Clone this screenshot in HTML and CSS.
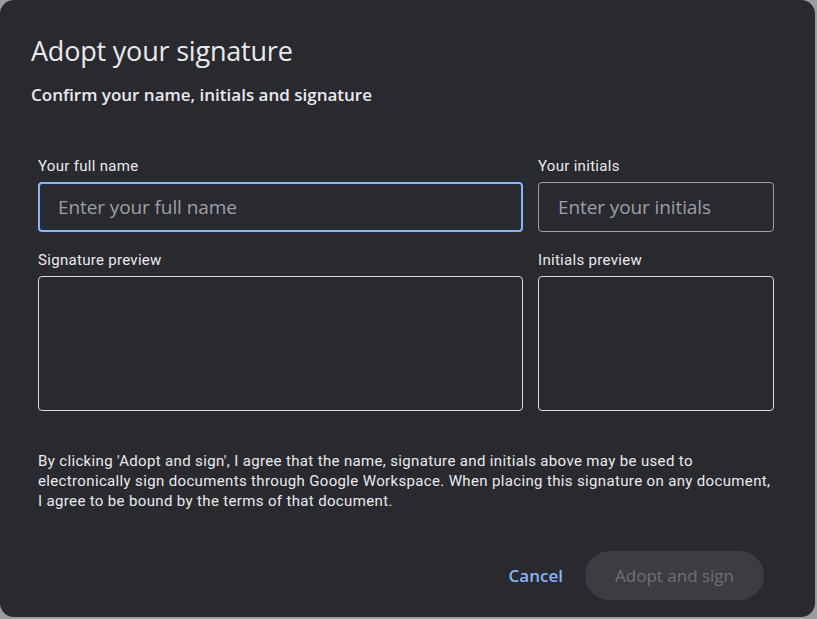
FILE: index.html
```html
<!DOCTYPE html>
<html>
<head>
<meta charset="utf-8">
<link rel="stylesheet" href="styles.css">
</head>
<body>
<div class="dialog">
  <h1 class="title">Adopt your signature</h1>
  <h2 class="subtitle">Confirm your name, initials and signature</h2>
  <div class="form">
    <div class="grid">
      <div class="field">
        <label class="label">Your full name</label>
        <div class="input focused">Enter your full name</div>
      </div>
      <div class="field">
        <label class="label">Your initials</label>
        <div class="input">Enter your initials</div>
      </div>
      <div class="field">
        <label class="label">Signature preview</label>
        <div class="preview"></div>
      </div>
      <div class="field">
        <label class="label">Initials preview</label>
        <div class="preview"></div>
      </div>
    </div>
    <p class="legal">By clicking 'Adopt and sign', I agree that the name, signature and initials above may be used to electronically sign documents through Google Workspace. When placing this signature on any document, I agree to be bound by the terms of that document.</p>
  </div>
  <div class="actions">
    <button class="btn-text">Cancel</button>
    <button class="btn-primary" disabled>Adopt and sign</button>
  </div>
</div>
</body>
</html>
```

FILE: styles.css
```css
html, body {
  margin: 0;
  padding: 0;
  background: #9c9c9c;
  width: 817px;
  height: 619px;
  overflow: hidden;
}
.dialog {
  width: 815px;
  height: 617px;
  box-sizing: border-box;
  background: #292a2d;
  border-radius: 14px;
  padding: 33px 41px 0 31px;
  color: #e8eaed;
  font-family: "Open Sans", Roboto, sans-serif;
}
.title {
  margin: 0;
  font-size: 27px;
  font-weight: 400;
  line-height: 36px;
  letter-spacing: -0.2px;
}
.subtitle {
  margin: 16px 0 0 0;
  font-size: 17px;
  font-weight: 600;
  line-height: 20px;
}
.form {
  padding-left: 7px;
  margin-top: 51px;
}
.grid {
  display: grid;
  grid-template-columns: 485px 236px;
  column-gap: 15px;
  row-gap: 18px;
}
.field {
  display: flex;
  flex-direction: column;
}
.label {
  font-family: Roboto, sans-serif;
  font-size: 15px;
  line-height: 20px;
  color: #e8eaed;
  margin-bottom: 6px;
  letter-spacing: 0.3px;
}
.input {
  height: 50px;
  box-sizing: border-box;
  border: 1px solid #9aa0a6;
  border-radius: 4px;
  padding: 0 19px;
  display: flex;
  align-items: center;
  font-size: 19px;
  color: #9aa0a6;
  letter-spacing: -0.1px;
}
.input.focused {
  border: 2px solid #8ab4f8;
  padding-left: 18px;
}
.preview {
  height: 135px;
  box-sizing: border-box;
  border: 1px solid #dadce0;
  border-radius: 4px;
}
.legal {
  margin: 40px 0 0 0;
  font-family: Roboto, sans-serif;
  font-size: 15px;
  line-height: 20px;
  color: #e8eaed;
  letter-spacing: 0.35px;
  width: 736px;
}
.actions {
  display: flex;
  justify-content: flex-end;
  align-items: center;
  margin-top: 40px;
  gap: 22px;
  margin-right: 10px;
}
.btn-text {
  background: none;
  border: none;
  padding: 0;
  font-family: "Open Sans", Roboto, sans-serif;
  font-size: 17px;
  font-weight: 600;
  color: #8ab4f8;
}
.btn-primary {
  height: 49px;
  padding: 0 30px;
  border-radius: 25px;
  border: none;
  background: #3c3d40;
  color: #6e7074;
  font-family: "Open Sans", Roboto, sans-serif;
  font-size: 17px;
  font-weight: 500;
}
```
